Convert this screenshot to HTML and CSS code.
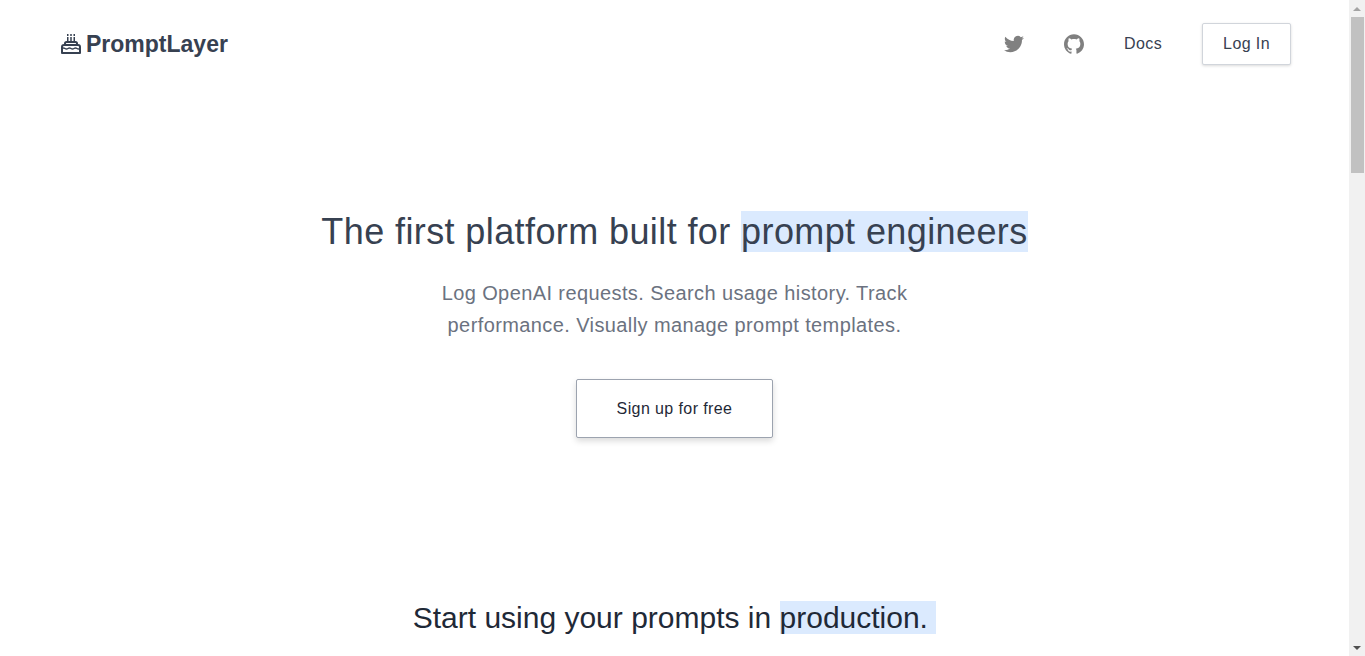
FILE: index.html
```
<!DOCTYPE html>
<html lang="en">
<head>
    <meta charset="UTF-8">
    <meta name="viewport" content="width=device-width, initial-scale=1.0">
    <link rel="stylesheet" href="styles.css">
    <title>PromptLayer</title>
</head>
<body>
    <div class="page">
        <header class="main-header">
            <a class="logo" href="#">
                <svg class="logo-icon" viewBox="0 0 20 20" fill="none" stroke="currentColor" stroke-width="2" aria-hidden="true">
                    <path d="M1 19V13Q1 11 3 11H17Q19 11 19 13V19Z" stroke-linejoin="round"/>
                    <path d="M4 11V9.500Q4 8 5.500 8H14.500Q16 8 16 9.500V11"/>
                    <path d="M1 14.500Q2.500 13.500 4 14.500T7 14.500T10 14.500T13 14.500T16 14.500T19 14.500" stroke-width="1.500"/>
                    <path d="M6.750 3V7M10 3V7M13.250 3V7" stroke-width="1.500"/>
                    <path d="M6.750 0V2M10 0V2M13.250 0V2" stroke-width="1.500"/>
                </svg>
                <span>PromptLayer</span>
            </a>
            <nav>
                <ul class="nav-links">
                    <li>
                        <a class="social" href="#" aria-label="Twitter">
                            <svg viewBox="0 0 24 24" fill="currentColor" aria-hidden="true"><path d="M23.953 4.57a10 10 0 0 1-2.825.775 4.958 4.958 0 0 0 2.163-2.723c-.951.555-2.005.959-3.127 1.184a4.92 4.92 0 0 0-8.384 4.482C7.69 8.095 4.067 6.13 1.64 3.162a4.822 4.822 0 0 0-.666 2.475c0 1.71.87 3.213 2.188 4.096a4.904 4.904 0 0 1-2.228-.616v.06a4.923 4.923 0 0 0 3.946 4.827 4.996 4.996 0 0 1-2.212.085 4.936 4.936 0 0 0 4.604 3.417 9.867 9.867 0 0 1-6.102 2.105c-.39 0-.779-.023-1.17-.067a13.995 13.995 0 0 0 7.557 2.209c9.053 0 13.998-7.496 13.998-13.985 0-.21 0-.42-.015-.63A9.935 9.935 0 0 0 24 4.59z"/></svg>
                        </a>
                    </li>
                    <li>
                        <a class="social" href="#" aria-label="GitHub">
                            <svg viewBox="0 0 24 24" fill="currentColor" aria-hidden="true"><path d="M12 .297c-6.63 0-12 5.373-12 12 0 5.303 3.438 9.8 8.205 11.385.6.113.82-.258.82-.577 0-.285-.01-1.04-.015-2.04-3.338.724-4.042-1.61-4.042-1.61C4.422 18.07 3.633 17.7 3.633 17.7c-1.087-.744.084-.729.084-.729 1.205.084 1.838 1.236 1.838 1.236 1.07 1.835 2.809 1.305 3.495.998.108-.776.417-1.305.76-1.605-2.665-.3-5.466-1.332-5.466-5.93 0-1.31.465-2.38 1.235-3.22-.135-.303-.54-1.523.105-3.176 0 0 1.005-.322 3.3 1.23.96-.267 1.98-.399 3-.405 1.02.006 2.04.138 3 .405 2.28-1.552 3.285-1.23 3.285-1.23.645 1.653.24 2.873.12 3.176.765.84 1.23 1.91 1.23 3.22 0 4.61-2.805 5.625-5.475 5.92.42.36.81 1.096.81 2.22 0 1.606-.015 2.896-.015 3.286 0 .315.21.69.825.57C20.565 22.092 24 17.592 24 12.297c0-6.627-5.373-12-12-12"/></svg>
                        </a>
                    </li>
                    <li><a href="#">Docs</a></li>
                    <li><button class="btn-login" type="button">Log In</button></li>
                </ul>
            </nav>
        </header>

        <main>
            <section class="hero">
                <h1>The first platform built for <span class="highlight">prompt engineers</span></h1>
                <p>Log OpenAI requests. Search usage history. Track performance. Visually manage prompt templates.</p>
                <button class="btn-signup" type="button">Sign up for free</button>
            </section>
            <section class="production">
                <h2>Start using your prompts in <span class="highlight">production.&nbsp;</span></h2>
            </section>
        </main>
    </div>

    <div class="scrollbar" aria-hidden="true">
        <span class="arrow arrow-up"></span>
        <span class="thumb"></span>
        <span class="arrow arrow-down"></span>
    </div>
</body>
</html>
```
FILE: styles.css
```
*, body{
    box-sizing: border-box;
    margin: 0;
}
body{
    display: flex;
    height: 100vh;
    overflow: hidden;
    font-family: 'Liberation Sans', Arial, sans-serif;
    color: #374151;
    background: #fff;
}
ul{
    padding: 0;
    list-style: none;
}
a{
    color: inherit;
    text-decoration: none;
}
button{
    font: inherit;
    letter-spacing: inherit;
    background: #fff;
    border-radius: 2px;
    cursor: pointer;
}
svg{
    display: block;
}

.page{
    flex: 1;
    min-width: 0;
}

.main-header{
    display: flex;
    align-items: center;
    justify-content: space-between;
    padding: 23px 58px 0 61px;
}
.logo{
    display: flex;
    align-items: center;
    gap: 5px;
    font-size: 23px;
    line-height: 32px;
    font-weight: bold;
}
.logo-icon{
    width: 20px;
    height: 20px;
}
.nav-links{
    display: flex;
    align-items: center;
    gap: 40px;
    font-size: 16px;
    line-height: 24px;
    letter-spacing: 0.025em;
}
.social{
    color: #808080;
}
.social svg{
    width: 20px;
    height: 20px;
}
.btn-login{
    display: block;
    padding: 8px 20px;
    color: #374151;
    border: 1px solid #d1d5db;
    box-shadow: 0 1px 3px rgba(0, 0, 0, 0.15);
}

.hero{
    display: flex;
    flex-direction: column;
    align-items: center;
    padding: 147px 24px 0;
    text-align: center;
    letter-spacing: 0.025em;
}
h1, h2{
    font-weight: normal;
}
h1{
    font-size: 36px;
    line-height: 40px;
}
.hero p{
    max-width: 512px;
    margin-top: 25px;
    font-size: 20px;
    line-height: 32px;
    color: #6b7280;
}
.btn-signup{
    margin-top: 38px;
    padding: 16px 40px;
    font-size: 16px;
    line-height: 25px;
    color: #1f2937;
    border: 1px solid #9ca3af;
    box-shadow: 0 3px 6px rgba(0, 0, 0, 0.15);
}
.highlight{
    background: #dbeafe;
}

.production{
    padding: 162px 24px 0;
    text-align: center;
    color: #1f2937;
}
h2{
    font-size: 30px;
    line-height: 36px;
}

/* scrollbar */
.scrollbar{
    display: flex;
    flex-direction: column;
    align-items: center;
    width: 16px;
    padding: 7px 0 6px;
    background: #f1f1f1;
}
.arrow{
    border: 4px solid transparent;
}
.arrow-up{
    border-top: 0;
    border-bottom-color: #a3a3a3;
}
.arrow-down{
    margin-top: auto;
    border-bottom: 0;
    border-top-color: #505050;
}
.thumb{
    width: 13px;
    height: 156px;
    margin-top: 6px;
    background: #c1c1c1;
}
```
